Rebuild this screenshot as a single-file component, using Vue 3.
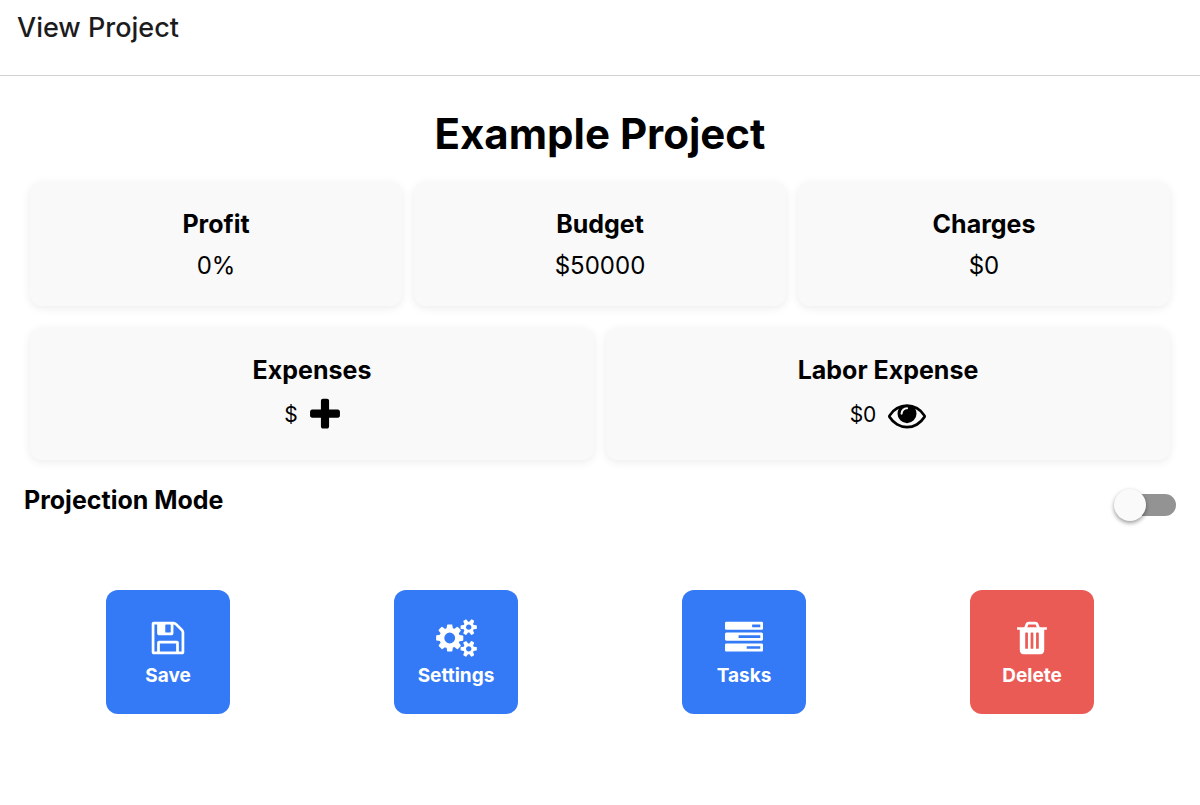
<script setup>
import { ref } from 'vue'

const projection = ref(false)

const totals = [
  { label: 'Profit', value: '0%' },
  { label: 'Budget', value: '$50000' },
  { label: 'Charges', value: '$0' },
]

const icons = {
  plus: 'M1600 736v192q0 40-28 68t-68 28h-416v416q0 40-28 68t-68 28h-192q-40 0-68-28t-28-68v-416h-416q-40 0-68-28t-28-68v-192q0-40 28-68t68-28h416v-416q0-40 28-68t68-28h192q40 0 68 28t28 68v416h416q40 0 68 28t28 68z',
  eye: 'M1664 960q-152-236-381-353 61 104 61 225 0 185-131.5 316.5t-316.5 131.5-316.5-131.5-131.5-316.5q0-121 61-225-229 117-381 353 133 205 333.5 326.5t434.5 121.5 434.5-121.5 333.5-326.5zm-720-384q0-20-14-34t-34-14q-125 0-214.5 89.5t-89.5 214.5q0 20 14 34t34 14 34-14 14-34q0-86 61-147t147-61q20 0 34-14t14-34zm848 384q0 34-20 69-140 230-376.5 368.5t-499.5 138.5-499.5-139-376.5-368q-20-35-20-69t20-69q140-229 376.5-368t499.5-139 499.5 139 376.5 368q20 35 20 69z',
}

const smallGear = 'v140q0 16-149 31-12 27-30 52 51 113 51 138 0 4-4 7-122 71-124 71-8 0-46-47t-52-68q-20 2-30 2t-30-2q-14 21-52 68t-46 47q-2 0-124-71-4-3-4-7 0-25 51-138-18-25-30-52-149-15-149-31v-140q0-16 149-31 13-29 30-52-51-113-51-138 0-4 4-7 4-2 35-20t59-34 30-16q8 0 46 46.5t52 67.5q20-2 30-2t30 2q51-71 92-112l6-2q4 0 124 70 4 3 4 7 0 25-51 138 17 23 30 52 149 15 149 31z'
const bar = 'v256q0 26-19 45t-45 19h-1664q-26 0-45-19t-19-45v-256q0-26 19-45t45-19h1664q26 0 45 19t19 45z'

const actions = [
  {
    label: 'Save',
    width: 1792,
    path: 'M512 1536h768v-384h-768v384zm896 0h128v-896q0-14-10-38.5t-20-34.5l-281-281q-10-10-34-20t-39-10v416q0 40-28 68t-68 28h-576q-40 0-68-28t-28-68v-416h-128v1280h128v-416q0-40 28-68t68-28h832q40 0 68 28t28 68v416zm-384-928v-320q0-13-9.5-22.5t-22.5-9.5h-192q-13 0-22.5 9.5t-9.5 22.5v320q0 13 9.5 22.5t22.5 9.5h192q13 0 22.5-9.5t9.5-22.5zm640 32v928q0 40-28 68t-68 28h-1344q-40 0-68-28t-28-68v-1344q0-40 28-68t68-28h928q40 0 88 20t76 48l280 280q28 28 48 76t20 88z',
  },
  {
    label: 'Settings',
    width: 1920,
    path: 'M896 896q0-106-75-181t-181-75-181 75-75 181 75 181 181 75 181-75 75-181zm768 512q0-52-38-90t-90-38-90 38-38 90q0 53 37.5 90.5t90.5 37.5 90.5-37.5 37.5-90.5zm0-1024q0-52-38-90t-90-38-90 38-38 90q0 53 37.5 90.5t90.5 37.5 90.5-37.5 37.5-90.5zm-384 421v185q0 10-7 19.5t-16 10.5l-155 24q-11 35-32 76 34 48 90 115 7 11 7 20 0 12-7 19-23 30-82.5 89.5t-78.5 59.5q-11 0-21-7l-115-90q-37 19-77 31-11 108-23 155-7 24-30 24h-186q-11 0-20-7.5t-10-17.5l-23-153q-34-10-75-31l-118 89q-7 7-20 7-11 0-21-8-144-133-144-160 0-9 7-19 10-14 41-53t47-61q-23-44-35-82l-152-24q-10-1-17-9.5t-7-19.5v-185q0-10 7-19.5t16-10.5l155-24q11-35 32-76-34-48-90-115-7-11-7-20 0-12 7-20 22-30 82-89t79-59q11 0 21 7l115 90q34-18 77-32 11-108 23-154 7-24 30-24h186q11 0 20 7.5t10 17.5l23 153q34 10 75 31l118-89q8-7 20-7 11 0 21 8 144 133 144 160 0 8-7 19-12 16-42 54t-45 60q23 48 34 82l152 23q10 2 17 10.5t7 19.5z'
      + 'M1920 1338' + smallGear + 'M1920 314' + smallGear,
  },
  {
    label: 'Tasks',
    width: 1792,
    path: 'M1024 1408h640v-128h-640v128zm-384-512h1024v-128h-1024v128zm640-512h384v-128h-384v128z'
      + 'M1792 1216' + bar + 'M1792 704' + bar + 'M1792 192' + bar,
  },
  {
    label: 'Delete',
    width: 1792,
    danger: true,
    path: 'M704 1376v-704q0-14-9-23t-23-9h-64q-14 0-23 9t-9 23v704q0 14 9 23t23 9h64q14 0 23-9t9-23zm256 0v-704q0-14-9-23t-23-9h-64q-14 0-23 9t-9 23v704q0 14 9 23t23 9h64q14 0 23-9t9-23zm256 0v-704q0-14-9-23t-23-9h-64q-14 0-23 9t-9 23v704q0 14 9 23t23 9h64q14 0 23-9t9-23zm-544-992h448l-48-117q-7-9-17-11h-317q-10 2-17 11zm928 32v64q0 14-9 23t-23 9h-96v948q0 83-47 143.5t-113 60.5h-832q-66 0-113-58.5t-47-141.5v-952h-96q-14 0-23-9t-9-23v-64q0-14 9-23t23-9h309l70-167q15-37 54-63t79-26h320q40 0 79 26t54 63l70 167h309q14 0 23 9t9 23z',
  },
]
</script>

<template>
  <div class="page">
    <header class="topbar">View Project</header>
    <main class="content">
      <h1>Example Project</h1>

      <div class="cards">
        <section v-for="t in totals" :key="t.label" class="card">
          <h2>{{ t.label }}</h2>
          <p class="value">{{ t.value }}</p>
        </section>
      </div>

      <div class="cards">
        <section class="card">
          <h2>Expenses</h2>
          <div class="line">
            <span>$</span>
            <button type="button" class="icon-button" aria-label="Add expense">
              <svg class="icon narrow" viewBox="192 0 1408 1792"><path :d="icons.plus" /></svg>
            </button>
          </div>
        </section>
        <section class="card">
          <h2>Labor Expense</h2>
          <div class="line">
            <span>$0</span>
            <button type="button" class="icon-button" aria-label="View labor expense">
              <svg class="icon" viewBox="0 0 1792 1792"><path :d="icons.eye" /></svg>
            </button>
          </div>
        </section>
      </div>

      <div class="mode">
        <label for="projection">Projection Mode</label>
        <input id="projection" v-model="projection" class="switch" type="checkbox" role="switch" />
      </div>

      <div class="actions">
        <button v-for="a in actions" :key="a.label" type="button" class="action" :class="{ danger: a.danger }">
          <svg class="icon" :class="{ wide: a.width > 1792 }" :viewBox="`0 0 ${a.width} 1792`"><path :d="a.path" /></svg>
          <span>{{ a.label }}</span>
        </button>
      </div>
    </main>
  </div>
</template>

<style>
body {
  background: #fff;
}
</style>

<style scoped>
.page {
  color: #000;
  font-family: Inter, "Liberation Sans", sans-serif;
}
.topbar {
  box-sizing: border-box;
  height: 76px;
  padding: 10px 17px;
  border-bottom: 1px solid #d2d2d2;
  color: #1c1c1e;
  font-size: 27px;
  font-weight: 500;
  line-height: 36px;
}
.content {
  padding: 32px 24px;
}
h1,
h2,
p {
  margin: 0;
}
h1 {
  font-size: 42px;
  font-weight: 700;
  line-height: 52px;
  text-align: center;
}
.cards {
  display: flex;
  gap: 12px;
  margin: 22px 6px 0;
}
.card {
  flex: 1;
  box-sizing: border-box;
  padding: 24px 24px 22px;
  border-radius: 12px;
  background: #f9f9f9;
  box-shadow: 0 2px 10px rgba(0, 0, 0, 0.08);
  text-align: center;
}
h2,
.mode label {
  font-size: 25px;
  font-weight: 700;
  line-height: 36px;
}
.value {
  margin-top: 6px;
  font-size: 24px;
  line-height: 36px;
}
.line {
  display: flex;
  align-items: center;
  justify-content: center;
  gap: 12px;
  margin-top: 4px;
  font-size: 21px;
  line-height: 46px;
}
.icon-button {
  display: flex;
  padding: 0;
  border: 0;
  background: none;
  color: inherit;
}
.icon {
  width: 38px;
  height: 38px;
  fill: currentColor;
}
.icon.narrow {
  width: 30px;
}
.icon.wide {
  width: 41px;
}
.mode {
  display: flex;
  align-items: flex-start;
  justify-content: space-between;
  margin-top: 22px;
}
.switch {
  position: relative;
  width: 60px;
  height: 22px;
  margin: 12px 0 0;
  appearance: none;
  border-radius: 11px;
  background: #939393;
}
.switch::before {
  content: "";
  position: absolute;
  top: -5px;
  left: -2px;
  width: 32px;
  height: 32px;
  border-radius: 50%;
  background: #fafafa;
  box-shadow: 0 2px 4px rgba(0, 0, 0, 0.4);
}
.switch:checked::before {
  left: 30px;
}
.actions {
  display: grid;
  grid-template-columns: repeat(4, 1fr);
  justify-items: center;
  margin-top: 72px;
}
.action {
  display: flex;
  flex-direction: column;
  align-items: center;
  justify-content: center;
  gap: 5px;
  box-sizing: border-box;
  width: 124px;
  height: 124px;
  padding: 4px 0 0;
  border: 0;
  border-radius: 12px;
  background: #347af6;
  color: #fff;
  font-family: inherit;
  font-size: 19px;
  font-weight: 700;
  line-height: 28px;
}
.action.danger {
  background: #eb5b56;
}
</style>
